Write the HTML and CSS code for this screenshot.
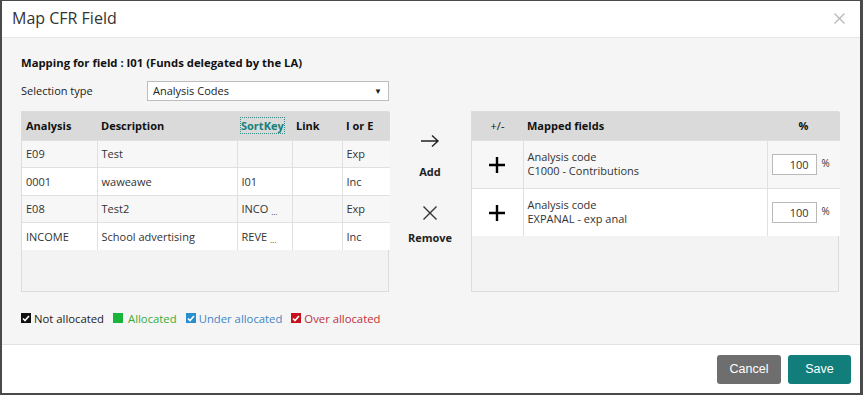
FILE: index.html
```html
<!DOCTYPE html>
<html>
<head>
<meta charset="utf-8">
<link rel="stylesheet" href="styles.css">
</head>
<body>
<div class="modal">
  <div class="header">
    <div class="title">Map CFR Field</div>
    <svg class="close" width="11" height="11" viewBox="0 0 11 11"><path d="M0.5 0.5L10.5 10.5M10.5 0.5L0.5 10.5" stroke="#b5b5b5" stroke-width="1.2"/></svg>
  </div>
  <div class="body">
    <div class="heading">Mapping for field : I01 (Funds delegated by the LA)</div>
    <div class="selrow">
      <span class="sellabel">Selection type</span>
      <div class="select"><span>Analysis Codes</span><span class="caret">▼</span></div>
    </div>
    <div class="main">
      <div class="box">
        <table class="grid left">
          <colgroup><col style="width:75px"><col style="width:140px"><col style="width:55px"><col style="width:50px"><col style="width:48px"></colgroup>
          <thead><tr><th>Analysis</th><th>Description</th><th><span class="sortkey">SortKey</span></th><th>Link</th><th>I or E</th></tr></thead>
          <tbody>
            <tr class="alt"><td>E09</td><td>Test</td><td></td><td></td><td>Exp</td></tr>
            <tr><td>0001</td><td>waweawe</td><td>I01</td><td></td><td>Inc</td></tr>
            <tr class="alt"><td>E08</td><td>Test2</td><td>INCO <span class="dots">...</span></td><td></td><td>Exp</td></tr>
            <tr><td>INCOME</td><td>School advertising</td><td>REVE <span class="dots">...</span></td><td></td><td>Inc</td></tr>
          </tbody>
        </table>
      </div>
      <div class="actions">
        <div class="action">
          <svg width="20" height="14" viewBox="0 0 20 14"><path d="M1 7H18M12 1.5L18 7L12 12.5" fill="none" stroke="#222" stroke-width="1.4"/></svg>
          <span>Add</span>
        </div>
        <div class="action remove">
          <svg width="16" height="16" viewBox="0 0 16 16"><path d="M1.5 1.5L14.5 14.5M14.5 1.5L1.5 14.5" stroke="#333" stroke-width="1.4"/></svg>
          <span>Remove</span>
        </div>
      </div>
      <div class="box">
        <table class="grid right">
          <colgroup><col style="width:51px"><col style="width:244px"><col style="width:73px"></colgroup>
          <thead><tr><th class="pm">+/-</th><th>Mapped fields</th><th class="pct">%</th></tr></thead>
          <tbody>
            <tr class="alt"><td class="plus"><svg width="16" height="16" viewBox="0 0 16 16"><path d="M8 0V16M0 8H16" stroke="#000" stroke-width="2.4"/></svg></td><td>Analysis code<br>C1000 - Contributions</td><td class="pcell"><span class="inp">100</span><span class="unit">%</span></td></tr>
            <tr><td class="plus"><svg width="16" height="16" viewBox="0 0 16 16"><path d="M8 0V16M0 8H16" stroke="#000" stroke-width="2.4"/></svg></td><td>Analysis code<br>EXPANAL - exp anal</td><td class="pcell"><span class="inp">100</span><span class="unit">%</span></td></tr>
          </tbody>
        </table>
      </div>
    </div>
    <div class="legend">
      <span class="item"><span class="chk black"><svg width="8" height="7" viewBox="0 0 8 7"><path d="M1 3.5L3 5.5L7 1" fill="none" stroke="#fff" stroke-width="1.6"/></svg></span>Not allocated</span>
      <span class="item green"><span class="chk sq"></span>Allocated</span>
      <span class="item blue"><span class="chk bl"><svg width="8" height="7" viewBox="0 0 8 7"><path d="M1 3.5L3 5.5L7 1" fill="none" stroke="#fff" stroke-width="1.6"/></svg></span>Under allocated</span>
      <span class="item red"><span class="chk rd"><svg width="8" height="7" viewBox="0 0 8 7"><path d="M1 3.5L3 5.5L7 1" fill="none" stroke="#fff" stroke-width="1.6"/></svg></span>Over allocated</span>
    </div>
  </div>
  <div class="footer">
    <button class="btn cancel">Cancel</button>
    <button class="btn save">Save</button>
  </div>
</div>
</body>
</html>
```

FILE: styles.css
```css
* { box-sizing: border-box; }
html, body { margin: 0; padding: 0; background: #fff; }
body { font-family: "Open Sans", "Noto Sans", sans-serif; font-size: 11px; color: #222; }
.modal {
  width: 863px; height: 395px;
  border-style: solid; border-color: #4a4a4a;
  border-width: 1px 3px 2px 2px;
  display: flex; flex-direction: column;
  background: #fff;
}
.header {
  height: 37px; flex: none;
  display: flex; align-items: center; justify-content: space-between;
  padding: 0 15px 0 10px;
  border-bottom: 1px solid #e6e6e6;
}
.title { font-size: 16px; color: #333; padding-bottom: 2px; }
.close { margin-top: -2px; }
.body {
  flex: none; height: 307px; background: #f5f5f5;
  padding: 16px 21px 0 19px;
  border-bottom: 1px solid #e2e2e2;
}
.heading { font-weight: 700; font-size: 11.3px; color: #111; height: 18px; line-height: 18px; }
.selrow { display: flex; align-items: center; margin-top: 8px; height: 21px; }
.sellabel { width: 126px; }
.select {
  width: 242px; height: 20px; background: #fff; border: 1px solid #bdbdbd;
  display: flex; justify-content: space-between; align-items: center; padding: 0 6px 0 5px;
}
.caret { font-size: 8px; color: #222; }
.main { display: flex; margin-top: 10px; height: 181px; }
.box { width: 368px; height: 181px; border: 1px solid #dcdcdc; background: #f3f3f3; flex: none; }
.grid { width: 100%; border-collapse: collapse; table-layout: fixed; }
.grid th {
  background: #dadada; height: 28px; text-align: left; font-weight: 700;
  padding: 0 4px; font-size: 11px; color: #111;
}
.grid td {
  height: 27.5px; padding: 0 4px; border-top: 1px solid #e0e0e0; border-left: 1px solid #e0e0e0;
  background: #fff; color: #333;
}
.grid td:first-child { border-left: none; }
.grid tr.alt td { background: #f7f7f7; }
.left td, .left th { padding-left: 4px; }
.sortkey { color: #17807b; outline: 1px dotted #3a8a86; outline-offset: 0; }
.dots { font-size: 8px; vertical-align: -2px; }
.right th.pm { text-align: center; font-weight: 400; }
.right th.pct { text-align: center; }
.right td { height: 48px; line-height: 14px; }
.right td.plus { text-align: center; padding-top: 2px; }
.right td.plus svg { display: block; margin: 0 auto; }
.pcell { white-space: nowrap; padding-left: 4px !important; vertical-align: middle; }
.inp {
  display: inline-block; width: 45px; height: 21px; border: 1px solid #b9b9b9; background: #fff;
  text-align: right; padding-right: 7px; line-height: 19px; vertical-align: middle; color: #333;
}
.unit { display: inline-block; margin-left: 5px; vertical-align: middle; margin-top: -3px; font-size: 10px; }
.actions { width: 82px; flex: none; display: flex; flex-direction: column; align-items: center; padding-top: 23px; }
.action { display: flex; flex-direction: column; align-items: center; font-weight: 700; color: #222; }
.action span { margin-top: 16px; }
.remove { margin-top: 26px; }
.remove span { margin-top: 9px; }
.legend { display: flex; align-items: center; margin-top: 18px; height: 16px; font-size: 11.3px; }
.item { display: inline-flex; align-items: center; margin-right: 9px; color: #222; }
.chk { width: 10px; height: 10px; display: inline-flex; align-items: center; justify-content: center; margin-right: 3px; }
.chk.black { background: #111; }
.chk.sq { background: #18b53a; margin-right: 5px; }
.chk.bl { background: #2a8fcf; }
.chk.rd { background: #c8101e; }
.green { color: #3aaa3a; }
.blue { color: #3d86c6; }
.red { color: #c0303a; }
.footer { flex: 1; display: flex; justify-content: flex-end; align-items: center; padding: 0 9px 0 0; gap: 7px; }
.btn {
  border: none; border-radius: 3px; height: 29px; color: #fff;
  font-family: "Liberation Sans", Arial, sans-serif; font-size: 12.5px; padding: 0;
}
.cancel { background: #6e6e6e; width: 64px; }
.save { background: #117e7b; width: 63px; }
```
